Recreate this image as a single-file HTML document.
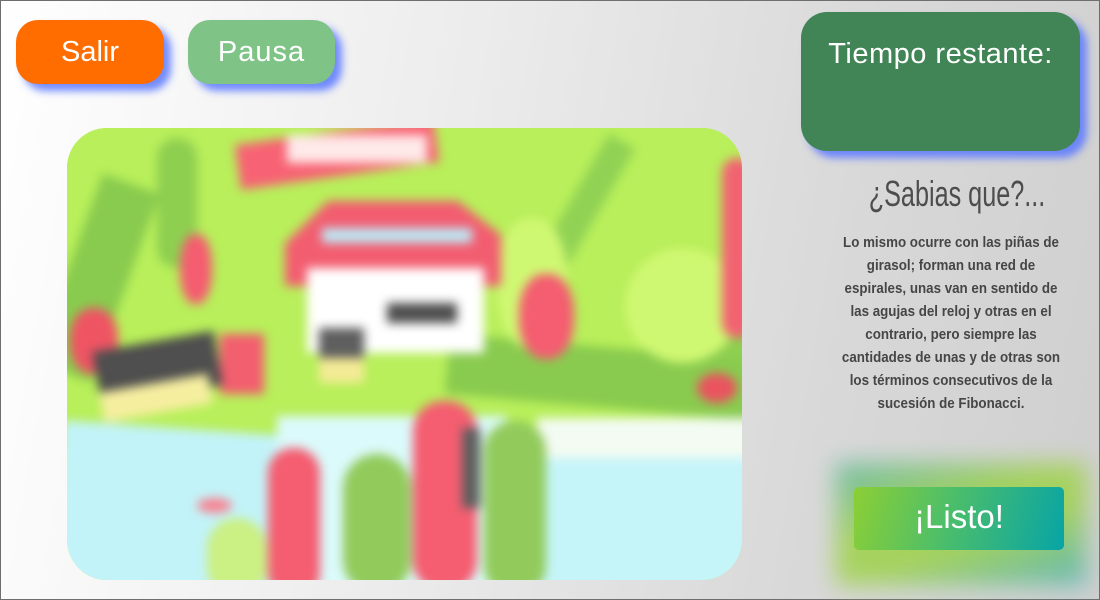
<!DOCTYPE html>
<html><head><meta charset="utf-8"><style>
*{margin:0;padding:0;box-sizing:border-box}
html,body{width:1100px;height:600px;overflow:hidden}
body{position:relative;background:linear-gradient(100deg,#ffffff 0%,#ececec 40%,#d8d8d8 75%,#cfcfcf 100%);border:1px solid #6e6e6e;font-family:"Liberation Sans",sans-serif}
.btn{position:absolute;color:#fff;text-align:center;border-radius:22px;box-shadow:7px 7px 8px rgba(90,120,255,.85)}
#salir{left:15px;top:19px;width:148px;height:64px;background:#ff6c00;font-size:29px;line-height:64px}
#pausa{left:187px;top:19px;width:147px;height:64px;background:#7fc386;font-size:29px;line-height:64px;letter-spacing:1px}
#tiempo{left:800px;top:11px;width:279px;height:139px;border-radius:26px;background:#418455;font-size:29px;padding-top:26px;letter-spacing:.5px}
#sab{position:absolute;left:806px;top:172px;width:300px;text-align:center;font-size:36px;color:#4d4d4d;transform:scaleX(.7)}
#txt{position:absolute;left:790px;top:230px;width:320px;text-align:center;font-weight:bold;font-size:15px;line-height:23px;color:#464646;transform:scaleX(.89)}
#glow{position:absolute;left:835px;top:462px;width:250px;height:122px;background:linear-gradient(160deg,#5fb8a0 0%,#9ed24a 40%,#9ed24a 60%,#4cb4b4 100%);filter:blur(12px);opacity:.85}
#listo{position:absolute;left:853px;top:486px;width:210px;height:63px;border-radius:5px;background:linear-gradient(105deg,#8ccf35 0%,#4cbe6a 45%,#07a4a6 100%);color:#fff;font-size:33px;text-align:center;line-height:60px}
#img{position:absolute;left:66px;top:127px;width:675px;height:452px;border-radius:40px;overflow:hidden;background:#b4ee50}
#img .in{position:absolute;inset:-10px;filter:blur(5px)}
.s{position:absolute}
#img .fade{position:absolute;inset:0;background:rgba(255,255,255,.06)}
</style></head><body>
<div class="btn" id="salir">Salir</div>
<div class="btn" id="pausa">Pausa</div>
<div class="btn" id="tiempo">Tiempo restante:</div>
<div id="sab">¿Sabias que?...</div>
<div id="txt">Lo mismo ocurre con las piñas de<br>girasol; forman una red de<br>espirales, unas van en sentido de<br>las agujas del reloj y otras en el<br>contrario, pero siempre las<br>cantidades de unas y de otras son<br>los términos consecutivos de la<br>sucesión de Fibonacci.</div>
<div id="glow"></div>
<div id="listo">¡Listo!</div>
<div id="img"><div class="in">
<div class="s" style="left:0;top:0;width:700px;height:480px;background:#b4ee50"></div>
<div class="s" style="left:10px;top:60px;width:60px;height:200px;background:#82c844;transform:rotate(20deg)"></div>
<div class="s" style="left:100px;top:20px;width:40px;height:130px;background:#88cc46;border-radius:20px"></div>
<div class="s" style="left:500px;top:10px;width:30px;height:200px;background:#8bd04a;transform:rotate(30deg)"></div>
<div class="s" style="left:560px;top:210px;width:200px;height:40px;background:#88cc46;transform:rotate(-20deg)"></div>
<div class="s" style="left:390px;top:230px;width:330px;height:60px;background:#82c844;transform:rotate(5deg)"></div>
<div class="s" style="left:568px;top:130px;width:115px;height:115px;background:#cdf86a;border-radius:50%"></div>
<div class="s" style="left:440px;top:100px;width:70px;height:130px;background:#cdf86a;border-radius:45%"></div>
<div class="s" style="left:180px;top:13px;width:200px;height:45px;background:#f75a6c;transform:rotate(-8deg)"></div>
<div class="s" style="left:230px;top:17px;width:140px;height:28px;background:#ffe8e8"></div>
<div class="s" style="left:228px;top:83px;width:216px;height:85px;background:#f25468;clip-path:polygon(0 50%,20% 0,80% 0,100% 40%,100% 100%,0 100%)"></div>
<div class="s" style="left:250px;top:150px;width:177px;height:85px;background:#ffffff"></div>
<div class="s" style="left:265px;top:110px;width:150px;height:15px;background:#b9e7f5"></div>
<div class="s" style="left:330px;top:185px;width:70px;height:20px;background:#444"></div>
<div class="s" style="left:262px;top:210px;width:45px;height:30px;background:#555"></div>
<div class="s" style="left:262px;top:240px;width:45px;height:25px;background:#f4ea90"></div>
<div class="s" style="left:462px;top:156px;width:55px;height:85px;background:#f45468;border-radius:45%"></div>
<div class="s" style="left:123px;top:116px;width:32px;height:70px;background:#f45468;border-radius:45%"></div>
<div class="s" style="left:13px;top:190px;width:48px;height:66px;background:#ee4a5a;border-radius:45%"></div>
<div class="s" style="left:163px;top:216px;width:44px;height:60px;background:#f25565"></div>
<div class="s" style="left:665px;top:40px;width:30px;height:180px;background:#f25a6a;border-radius:15px"></div>
<div class="s" style="left:39px;top:223px;width:123px;height:55px;background:#444;transform:rotate(-10deg)"></div>
<div class="s" style="left:44px;top:265px;width:110px;height:30px;background:#f6ed9a;transform:rotate(-10deg)"></div>
<div class="s" style="left:0;top:310px;width:230px;height:180px;background:#bff3f8;transform:rotate(4deg)"></div>
<div class="s" style="left:220px;top:298px;width:230px;height:180px;background:#d9fafb"></div>
<div class="s" style="left:480px;top:300px;width:240px;height:50px;background:#f3fbf2"></div>
<div class="s" style="left:470px;top:340px;width:250px;height:140px;background:#c2f5f9"></div>
<div class="s" style="left:211px;top:330px;width:52px;height:150px;background:#f45468;border-radius:25px"></div>
<div class="s" style="left:356px;top:283px;width:64px;height:190px;background:#f45468;border-radius:30px"></div>
<div class="s" style="left:286px;top:336px;width:68px;height:140px;background:#8cc852;border-radius:34px"></div>
<div class="s" style="left:427px;top:303px;width:62px;height:175px;background:#8cc852;border-radius:30px"></div>
<div class="s" style="left:405px;top:310px;width:18px;height:80px;background:#555"></div>
<div class="s" style="left:640px;top:255px;width:40px;height:30px;background:#e84a55;border-radius:50%"></div>
<div class="s" style="left:140px;top:380px;width:35px;height:15px;background:#f87a8a;border-radius:50%"></div>
<div class="s" style="left:150px;top:400px;width:60px;height:80px;background:#c8f07c;border-radius:30px"></div>
</div><div class="fade"></div></div>
</body></html>
